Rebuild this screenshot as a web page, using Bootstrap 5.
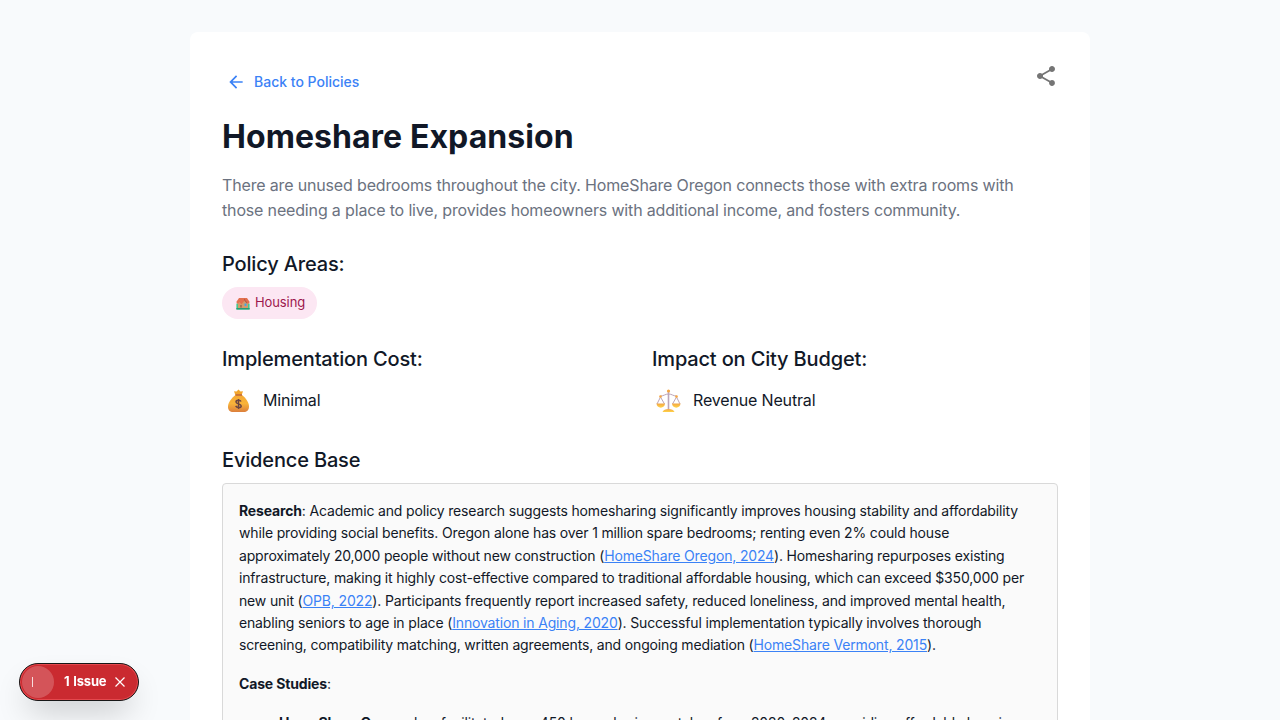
<!DOCTYPE html>
<html lang="en">
<head>
<meta charset="utf-8">
<meta name="viewport" content="width=device-width, initial-scale=1">
<title>Homeshare Expansion</title>
<link href="https://cdn.jsdelivr.net/npm/bootstrap@5.3.0/dist/css/bootstrap.min.css" rel="stylesheet">
<style>
body{background:#f8fafc;color:#111827;font-family:Inter,"Liberation Sans",sans-serif;font-size:16px;line-height:1.5;letter-spacing:-.16px;padding-top:32px}
.policy{width:900px;height:688px;border-radius:8px 8px 0 0;padding:32px}
.back-btn{color:#3b82f6;font-size:14px;font-weight:500;line-height:24.5px;letter-spacing:0;padding:6px 8px 6px 4px}
.title{font-size:32px;font-weight:700;line-height:42px;letter-spacing:.08px;margin:15px 0 0}
.summary{color:#6b7280;line-height:25px;margin:15.5px 0 0}
.sub{font-size:20px;font-weight:500;line-height:32px;margin:0}
.areas{margin-top:25px}
.chip{background:#fce7f3;color:#9d174d;font-size:13px;height:32px;border-radius:16px;width:95px;padding-left:14px;margin-top:7px;letter-spacing:-.1px}
.measures{margin-top:24px}
.measure{gap:8px;height:24px;margin-top:13px}
.measure svg{margin-top:1px;margin-bottom:-1px}
.ev-title{margin-top:32px}
.evidence{margin-top:7px;background:#fafafa;border:1px solid #d9d9d9;border-radius:4px;padding:16px;font-size:14px;line-height:22.4px;letter-spacing:-.16px}
.evidence p{margin:0 0 16px}
.evidence a{color:#3b82f6}
.evidence ul{margin-top:17px;padding-left:40px;list-style:none}
.issue{left:19px;top:663px;width:120px;height:38px;border-radius:19px;background:#ca2a30;border:1px solid #171717;box-shadow:inset 0 0 0 1px #e5484d,0 16px 32px -8px rgba(0,0,0,.24);color:#fff;font-size:13px;font-weight:700;letter-spacing:-.2px;word-spacing:1px}
.issue-dot{width:32px;height:32px;margin-left:2px;border-radius:50%;background:rgba(255,255,255,.2);padding-left:10px}
.issue-bar{width:1px;height:10px;background:#fff;opacity:.8}
.issue-text{margin-left:10px;width:42px}
</style>
</head>
<body class="overflow-hidden">
<main class="policy bg-white mx-auto overflow-hidden">
  <div class="d-flex justify-content-between align-items-start">
    <a class="back-btn d-flex align-items-center gap-2 text-decoration-none" href="#">
      <svg width="20" height="20" viewBox="0 0 24 24" fill="currentColor"><path d="M20 11H7.83l5.59-5.59L12 4l-8 8 8 8 1.41-1.41L7.83 13H20v-2z"/></svg>Back to Policies</a>
    <svg width="24" height="24" viewBox="0 0 24 24" fill="#757575"><path d="M18 16.08c-.76 0-1.44.3-1.96.77L8.91 12.7c.05-.23.09-.46.09-.7s-.04-.47-.09-.7l7.05-4.11c.54.5 1.25.81 2.04.81 1.66 0 3-1.34 3-3s-1.34-3-3-3-3 1.34-3 3c0 .24.04.47.09.7L8.04 9.81C7.5 9.31 6.79 9 6 9c-1.66 0-3 1.34-3 3s1.34 3 3 3c.79 0 1.5-.31 2.04-.81l7.12 4.16c-.05.21-.08.43-.08.65 0 1.61 1.31 2.92 2.92 2.92s2.92-1.31 2.92-2.92-1.31-2.92-2.92-2.92z"/></svg>
  </div>
  <h1 class="title">Homeshare Expansion</h1>
  <p class="summary">There are unused bedrooms throughout the city. HomeShare Oregon connects those with extra rooms with those needing a place to live, provides homeowners with additional income, and fosters community.</p>
  <section class="areas"><h2 class="sub">Policy Areas:</h2>
    <div class="chip d-flex align-items-center">
      <svg class="me-1" width="15" height="15" viewBox="0 0 15 15"><path fill="#43c98a" d="M.4 7.500h13.200v6H.4z"/><path fill="#279b75" d="M.4 12h13.200v1.500H.4z"/><path fill="#d49a6a" d="M2 5h10v7H2z"/><path fill="#e2704f" d="M.3 6L3 2h8l2.700 4-1.200 2L9 4 5.500 8.500 3.500 6 1.500 8z"/><path fill="#b9533f" d="M6.500 2.500l-2.500 3M8.500 2.500L11.500 7l-.7.500L7.800 4z"/><path fill="#a87354" d="M4 9h2v2.500H4z"/><path fill="#45a5e6" d="M8.500 7.500h2V10h-2z"/></svg><span>Housing</span>
    </div>
  </section>
  <div class="row measures">
    <section class="col-6"><h2 class="sub">Implementation Cost:</h2>
      <div class="d-flex align-items-center measure">
        <svg width="33" height="24" viewBox="0 0 33 24"><defs><linearGradient id="bag" x1="0" y1="0" x2="0" y2="1"><stop offset="0" stop-color="#f5a832"/><stop offset=".5" stop-color="#f8b43a"/><stop offset="1" stop-color="#dc7f3c"/></linearGradient></defs><path fill="#f2a52c" d="M12 2.200l2.500.3 2-2 2 2 2.500-.3-1.500 4.300h-6z"/><path fill="url(#bag)" d="M13.500 6h6.500c4 3 7 7.500 7 11.500 0 4-2.500 5.500-5 5.500H11c-3 0-5-1.500-5-5.500C6 13.500 9.500 9 13.500 6z"/><path stroke="#b65d3d" stroke-width="1.300" d="M13.500 6h6.500"/><path fill="none" stroke="#6a4542" stroke-width="1.500" d="M19 12.500c-.6-1.500-4.900-1.700-5 .4 0 2.400 5.200 1.600 5.200 4 0 2.200-4.600 2.200-5.500 0M16.500 10v10"/></svg><span>Minimal</span>
      </div></section>
    <section class="col-6"><h2 class="sub">Impact on City Budget:</h2>
      <div class="d-flex align-items-center measure">
        <svg width="33" height="24" viewBox="0 0 33 24"><defs><linearGradient id="pan" x1="0" y1="0" x2="0" y2="1"><stop offset="0" stop-color="#f3a545"/><stop offset="1" stop-color="#ffd447"/></linearGradient></defs><g fill="none" stroke="#bca5b8"><path stroke-width="1.600" d="M16.500 2v18"/><path d="M8.500 7c3.500 0 4.500-2 8-2s4.500 2 8 2M8.500 8L5 15M8.500 8l4 7M24.500 8l-4 7M24.500 8l3.500 7"/></g><path fill="url(#pan)" d="M4.500 14.500h8.500c0 5.500-8.500 5.500-8.500 0z"/><path fill="url(#pan)" d="M20 14.500h8.500c0 5.500-8.500 5.500-8.500 0z"/><path fill="url(#pan)" d="M10.500 23c1-4 11-4 12 0z"/><g fill="#f6a641"><circle cx="16.500" cy="2" r="1.600"/><circle cx="8.500" cy="7.500" r="1.300"/><circle cx="24.500" cy="7.500" r="1.300"/></g></svg><span>Revenue Neutral</span>
      </div></section>
  </div>
  <h2 class="sub ev-title">Evidence Base</h2>
  <article class="evidence">
    <p><b>Research</b>: Academic and policy research suggests homesharing significantly improves housing stability and affordability while providing social benefits. Oregon alone has over 1 million spare bedrooms; renting even 2% could house approximately 20,000 people without new construction (<a href="#">HomeShare Oregon, 2024</a>). Homesharing repurposes existing infrastructure, making it highly cost-effective compared to traditional affordable housing, which can exceed $350,000 per new unit (<a href="#">OPB, 2022</a>). Participants frequently report increased safety, reduced loneliness, and improved mental health, enabling seniors to age in place (<a href="#">Innovation in Aging, 2020</a>). Successful implementation typically involves thorough screening, compatibility matching, written agreements, and ongoing mediation (<a href="#">HomeShare Vermont, 2015</a>).</p>
    <p><b>Case Studies</b>:</p>
    <ul><li><b>HomeShare Oregon</b> has facilitated over 450 homesharing matches from 2020–2024, providing affordable housing</li></ul>
  </article>
</main>
<div class="issue position-fixed d-flex align-items-center">
  <div class="issue-dot d-flex align-items-center"><span class="issue-bar"></span></div>
  <span class="issue-text text-nowrap">1 Issue</span>
  <svg class="ms-2" width="12" height="12" viewBox="0 0 12 12" stroke="#fff" stroke-width="1.200"><path d="M1.500 1.500l9 9M10.500 1.500l-9 9"/></svg>
</div>
<script src="https://cdn.jsdelivr.net/npm/bootstrap@5.3.0/dist/js/bootstrap.bundle.min.js"></script>
</body>
</html>
